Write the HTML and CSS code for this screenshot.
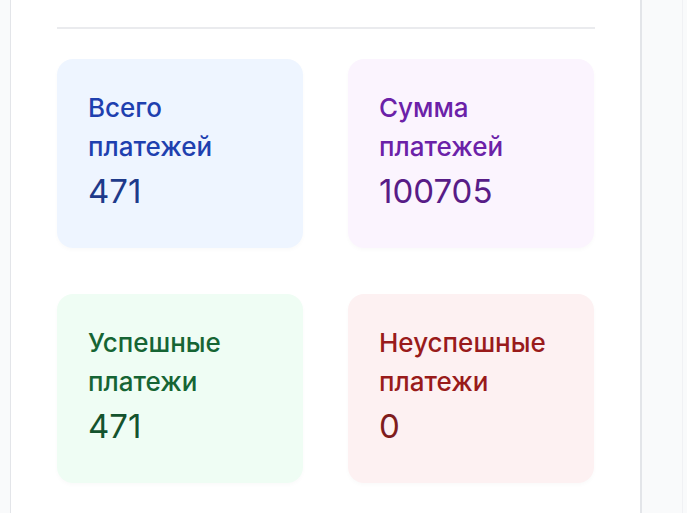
FILE: index.html
```html
<!DOCTYPE html>
<html lang="ru">
<head>
    <meta charset="UTF-8">
    <meta name="viewport" content="width=device-width, initial-scale=1.0">
    <title>Статистика платежей</title>
    <link rel="stylesheet" href="styles.css">
</head>
<body>
    <div class="page">
        <section class="panel">
            <div class="stats">
                <div class="stat-card stat-blue">
                    <div class="stat-label">Всего<br>платежей</div>
                    <div class="stat-value">471</div>
                </div>
                <div class="stat-card stat-purple">
                    <div class="stat-label">Сумма<br>платежей</div>
                    <div class="stat-value">100705</div>
                </div>
                <div class="stat-card stat-green">
                    <div class="stat-label">Успешные<br>платежи</div>
                    <div class="stat-value">471</div>
                </div>
                <div class="stat-card stat-red">
                    <div class="stat-label">Неуспешные<br>платежи</div>
                    <div class="stat-value">0</div>
                </div>
            </div>
        </section>
        <aside class="side"></aside>
    </div>
</body>
</html>
```

FILE: styles.css
```css
* {
    margin: 0;
    padding: 0;
    box-sizing: border-box;
}

body {
    font-family: Inter, "Noto Sans", sans-serif;
    background: #f9fafb;
    height: 100vh;
    overflow: hidden;
}

.page {
    display: flex;
    height: 100%;
    padding-left: 10px;
}

.panel {
    width: 632px;
    background: #fff;
    border-left: 1px solid #e3e5e9;
    border-right: 2px solid #e3e5e9;
    padding: 27px 45px 0 46px;
}

.side {
    flex: 1;
    border-right: 1px solid #f0f1f4;
    margin-right: 4px;
}

.stats {
    border-top: 2px solid #eaebee;
    padding-top: 30px;
    display: grid;
    grid-template-columns: 246px 246px;
    column-gap: 45px;
    row-gap: 46px;
}

.stat-card {
    height: 189px;
    border-radius: 16px;
    padding: 29px 31px;
    box-shadow: 0 2px 4px rgba(0, 0, 0, 0.025);
}

.stat-label {
    font-size: 26px;
    font-weight: 500;
    line-height: 39px;
}

.stat-value {
    font-size: 33px;
    font-weight: 400;
    line-height: 40px;
    margin-top: 5px;
}

.stat-blue { background: #eef5ff; }
.stat-blue .stat-label { color: #1e40af; }
.stat-blue .stat-value { color: #1e3a8a; }

.stat-purple { background: #fbf4fe; }
.stat-purple .stat-label { color: #6b21a8; }
.stat-purple .stat-value { color: #581c87; }

.stat-green { background: #effdf4; }
.stat-green .stat-label { color: #166534; }
.stat-green .stat-value { color: #14532d; }

.stat-red { background: #fdf1f2; }
.stat-red .stat-label { color: #991b1b; }
.stat-red .stat-value { color: #7f1d1d; }
```
